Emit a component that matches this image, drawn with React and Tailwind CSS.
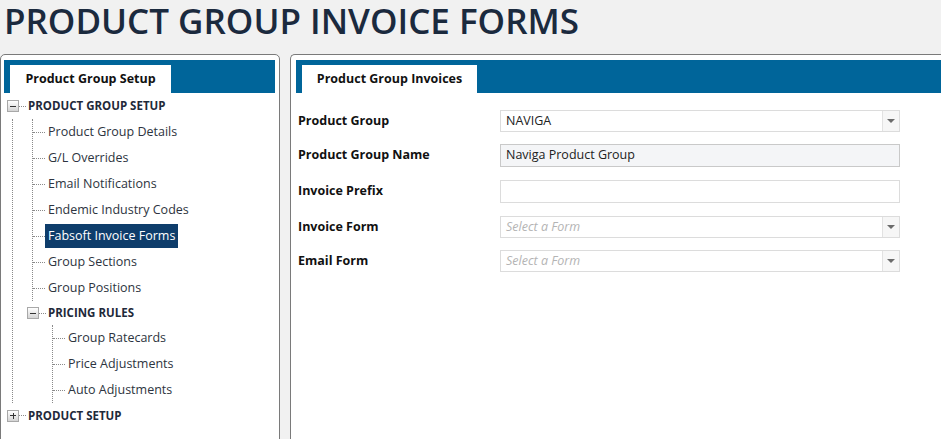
const rootItems = [
  'Product Group Details',
  'G/L Overrides',
  'Email Notifications',
  'Endemic Industry Codes',
  'Fabsoft Invoice Forms',
  'Group Sections',
  'Group Positions',
]

const pricingItems = ['Group Ratecards', 'Price Adjustments', 'Auto Adjustments']

function ToggleBox({ open }) {
  return (
    <span className="relative flex h-[12px] w-[12px] shrink-0 items-center justify-center border border-[#a8a8a8] bg-gradient-to-b from-white to-[#d4d4d4]">
      <span className="h-px w-[6px] bg-[#333]" />
      {!open && <span className="absolute h-[6px] w-px bg-[#333]" />}
    </span>
  )
}

function Leaf({ label, selected }) {
  return (
    <div className="flex h-[26px] items-center">
      <span className="w-[12px] border-t border-dotted border-[#8a8a8a]" />
      <span
        className={
          selected
            ? 'bg-[#0e3d6b] px-[3px] py-[3px] text-white'
            : 'ml-[3px] text-[#2d3440]'
        }
      >
        {label}
      </span>
    </div>
  )
}

function Branch({ label, open, height = 'h-[25px]' }) {
  return (
    <div className={`flex items-center ${height}`}>
      <ToggleBox open={open} />
      <span className="w-[7px] border-t border-dotted border-[#8a8a8a]" />
      <span className="ml-[2px] text-[11.5px] font-bold uppercase text-[#1f2a3a]">
        {label}
      </span>
    </div>
  )
}

function SelectBox({ value, placeholder }) {
  return (
    <div className="flex h-[22px] w-[400px] border border-[#dcdcdc] bg-white">
      <div className="flex flex-1 items-center pl-[5px] text-[12.5px]">
        {value ? (
          <span className="text-[#222]">{value}</span>
        ) : (
          <span className="italic text-[#b4b4b4]">{placeholder}</span>
        )}
      </div>
      <div className="flex w-[17px] items-center justify-center border-l border-[#e2e2e2] bg-[#f6f6f6]">
        <svg width="8" height="4" viewBox="0 0 8 4">
          <path d="M0 0h8L4 4z" fill="#6b6b6b" />
        </svg>
      </div>
    </div>
  )
}

function FormRow({ label, children, className = '' }) {
  return (
    <div className={`flex items-center ${className}`}>
      <div className="w-[204px] pl-[2px] text-[12.5px] font-bold text-[#111]">
        {label}
      </div>
      {children}
    </div>
  )
}

function Tab({ label, width }) {
  return (
    <div className="flex h-[33px] items-end bg-[#00659a] pl-[6px]">
      <div
        className={`flex h-[28px] items-center justify-center bg-white text-[12.5px] font-bold text-[#111] ${width}`}
      >
        {label}
      </div>
    </div>
  )
}

export default function App() {
  return (
    <div className="h-[439px] w-[941px] overflow-hidden bg-[#f1f1f1] font-['Open_Sans',sans-serif]">
      <div className="h-[54px] pl-[4px]">
        <h1 className="text-[35px] font-semibold leading-[42px] text-[#1b2a3e]">
          PRODUCT GROUP INVOICE FORMS
        </h1>
      </div>

      <div className="flex gap-[10px]">
        <div className="h-[400px] w-[280px] shrink-0 rounded-t-[5px] border border-[#7a7a7a] bg-white pl-[3px] pr-[4px] pt-[5px]">
          <Tab label="Product Group Setup" width="w-[161px]" />

          <div className="pl-[3px] text-[12.5px]">
            <Branch label="Product Group Setup" open height="h-[26px]" />
            <div className="ml-[5px] border-l border-dotted border-[#8a8a8a] pl-[19px]">
              <div className="border-l border-dotted border-[#8a8a8a]">
                {rootItems.map((item) => (
                  <Leaf
                    key={item}
                    label={item}
                    selected={item === 'Fabsoft Invoice Forms'}
                  />
                ))}
              </div>
              <div className="-ml-[5px]">
                <Branch label="Pricing Rules" open height="h-[24px]" />
                <div className="ml-[5px] pl-[20px]">
                  <div className="border-l border-dotted border-[#8a8a8a]">
                    {pricingItems.map((item) => (
                      <Leaf key={item} label={item} />
                    ))}
                  </div>
                </div>
              </div>
            </div>
            <Branch label="Product Setup" />
          </div>
        </div>

        <div className="h-[400px] flex-1 rounded-tl-[5px] border border-r-0 border-[#7a7a7a] bg-white pl-[5px] pt-[5px]">
          <Tab label="Product Group Invoices" width="w-[175px]" />

          <div className="flex flex-col pt-[17px]">
            <FormRow label="Product Group">
              <SelectBox value="NAVIGA" />
            </FormRow>
            <FormRow label="Product Group Name" className="mt-[12px]">
              <div className="flex h-[23px] w-[400px] items-center border border-[#c9c9c9] bg-[#f4f5f7] pl-[5px] text-[12.5px] text-[#222]">
                Naviga Product Group
              </div>
            </FormRow>
            <FormRow label="Invoice Prefix" className="mt-[13px]">
              <div className="h-[23px] w-[400px] border border-[#dcdcdc] bg-white" />
            </FormRow>
            <FormRow label="Invoice Form" className="mt-[13px]">
              <SelectBox placeholder="Select a Form" />
            </FormRow>
            <FormRow label="Email Form" className="mt-[12px]">
              <SelectBox placeholder="Select a Form" />
            </FormRow>
          </div>
        </div>
      </div>
    </div>
  )
}
